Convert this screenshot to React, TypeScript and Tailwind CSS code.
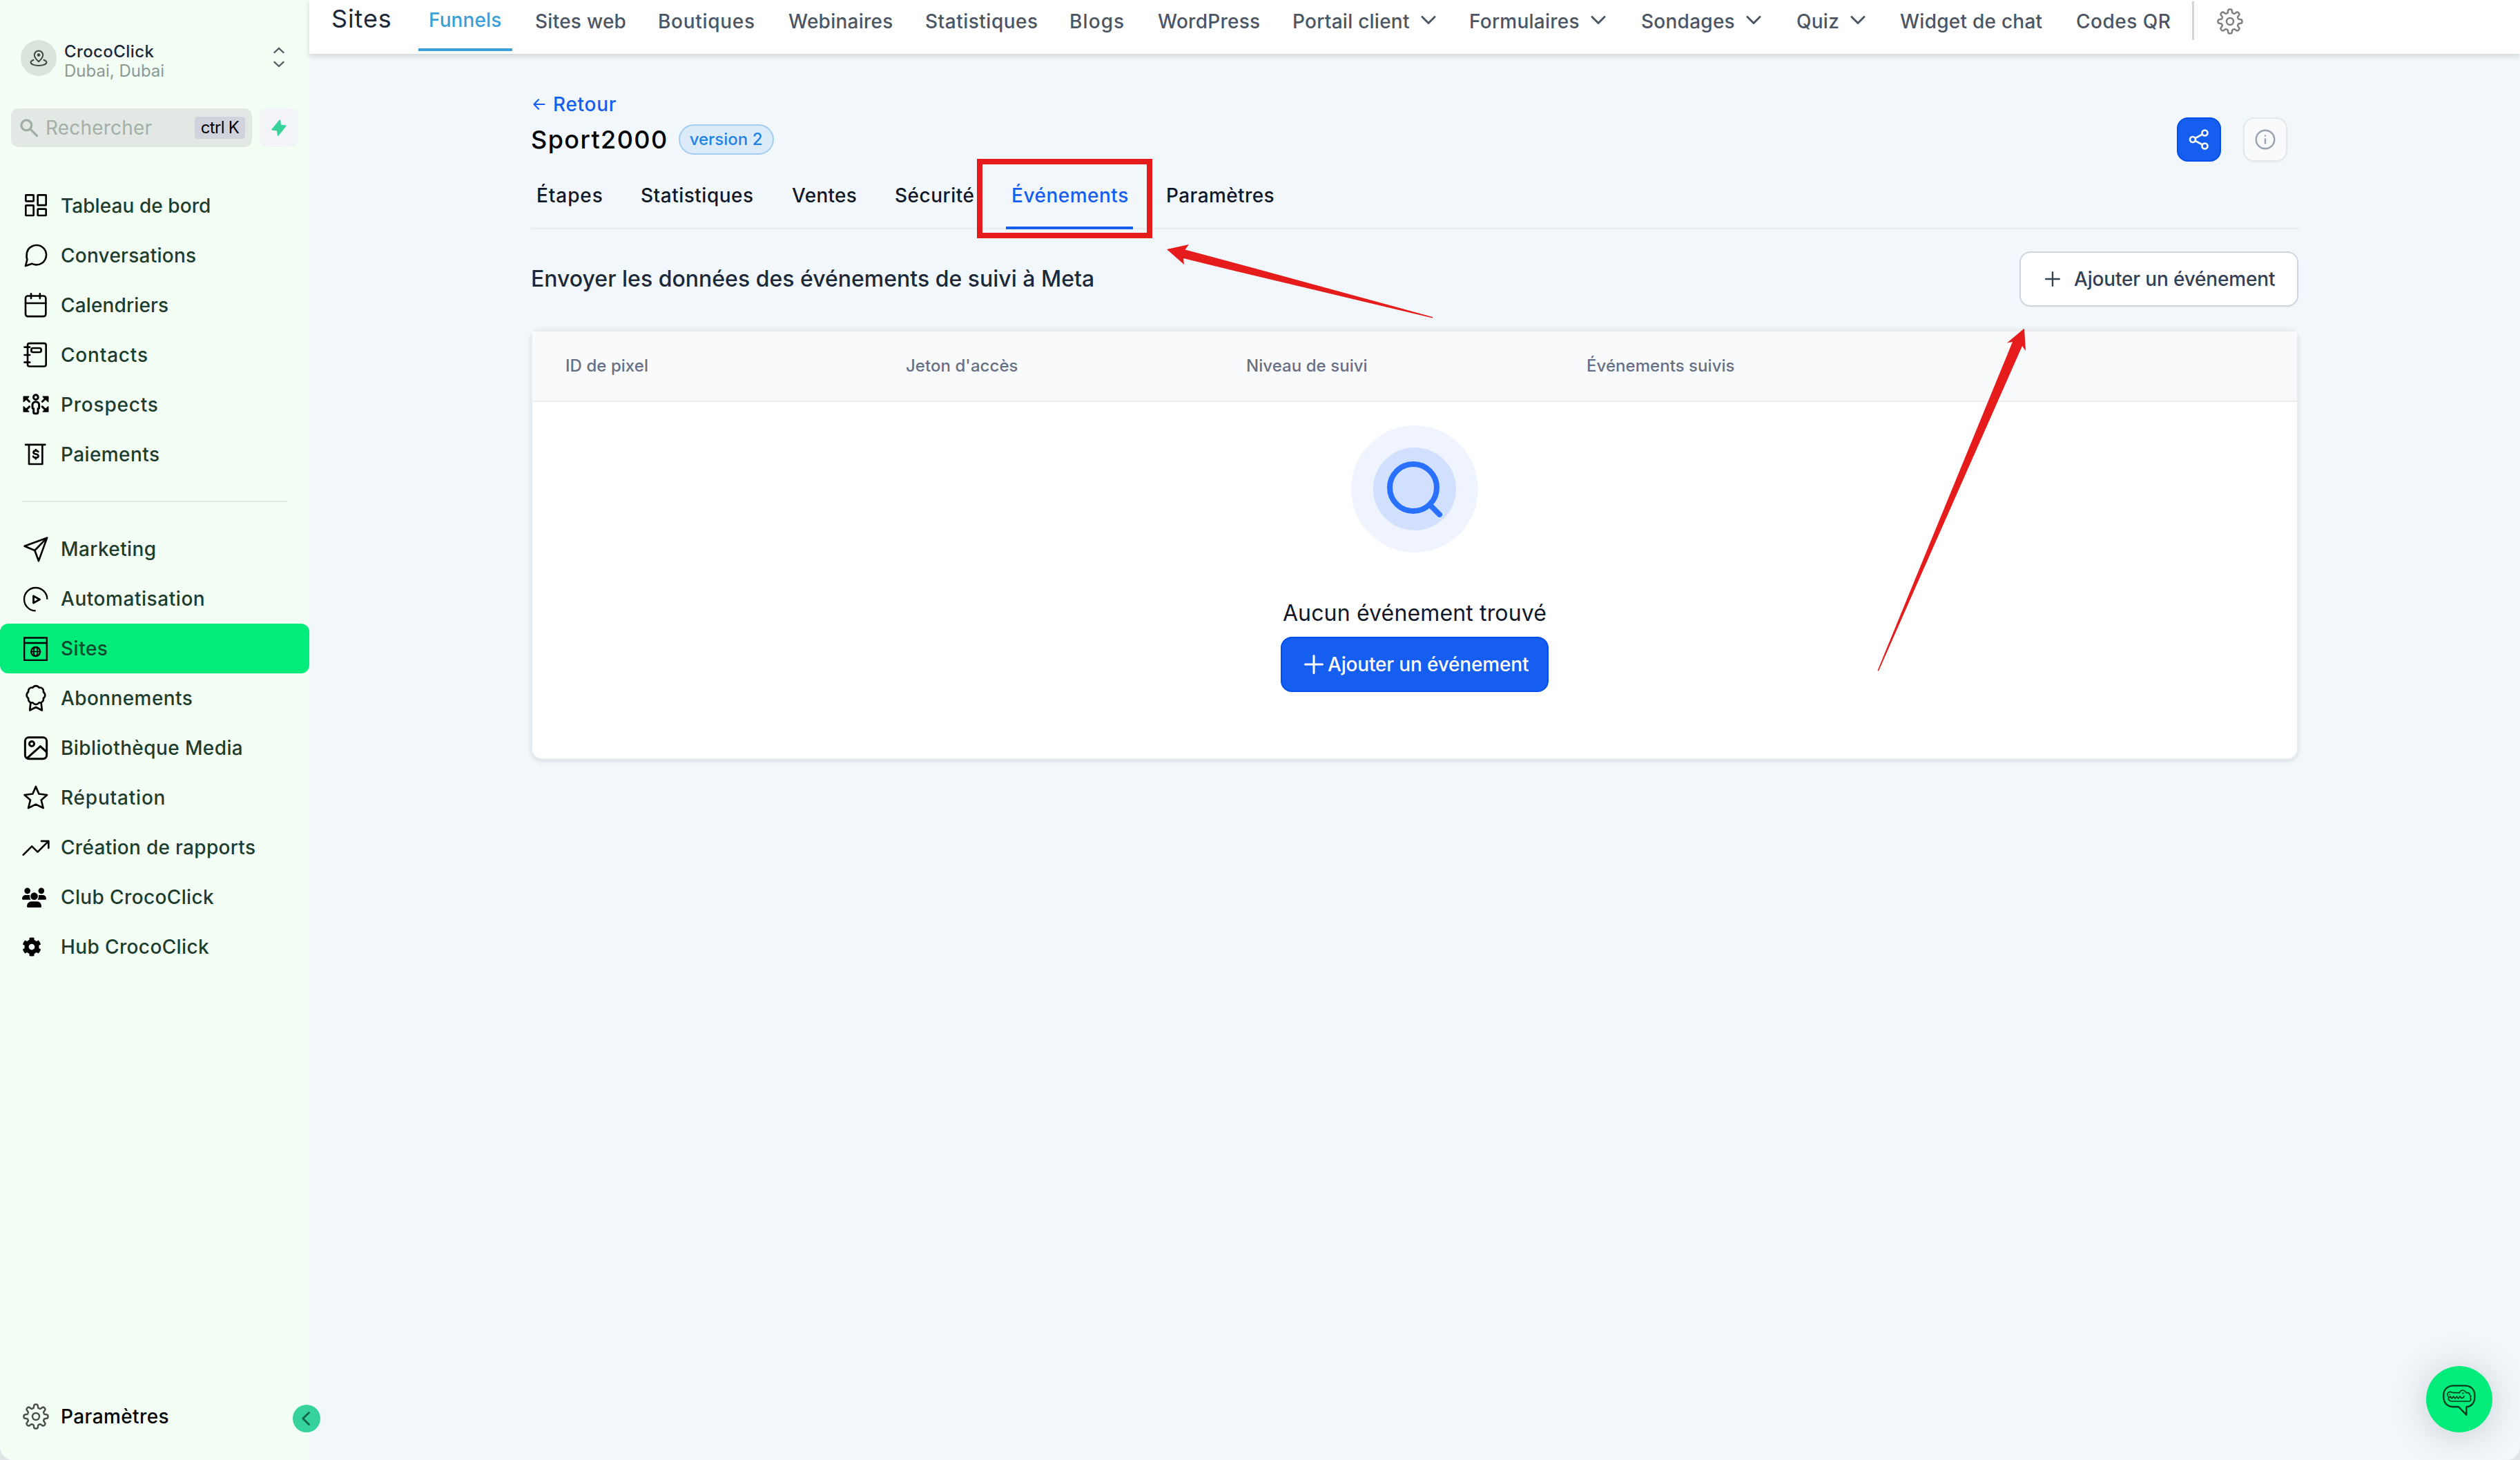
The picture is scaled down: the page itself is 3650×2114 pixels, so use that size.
import { FC, ReactNode } from "react";
import { FaCog } from "react-icons/fa";

type IconProps = {
  children: ReactNode;
  strokeWidth?: number;
};

const NavIcon: FC<IconProps> = ({ children, strokeWidth = 1.6 }) => (
  <svg
    viewBox="0 0 24 24"
    className="size-10 shrink-0 overflow-visible"
    fill="none"
    stroke="currentColor"
    strokeWidth={strokeWidth}
    strokeLinecap="round"
    strokeLinejoin="round"
    aria-hidden="true"
  >
    {children}
  </svg>
);

// eight soft teeth around a small hub
const gearPath = (() => {
  const points: string[] = [];
  for (let i = 0; i < 240; i++) {
    const angle = (i / 240) * Math.PI * 2;
    const wave = Math.tanh(2.2 * Math.cos(angle * 8)) / Math.tanh(2.2);
    const radius = 15 + 2.5 * wave;
    points.push(
      `${(20 + radius * Math.sin(angle)).toFixed(2)} ${(20 - radius * Math.cos(angle)).toFixed(2)}`
    );
  }
  return `M${points.join("L")}Z`;
})();

const GearIcon: FC<{ className?: string }> = ({ className }) => (
  <svg
    viewBox="0 0 40 40"
    className={className}
    fill="none"
    stroke="currentColor"
    strokeWidth={2.5}
    strokeLinejoin="round"
    aria-hidden="true"
  >
    <path d={gearPath} />
    <circle cx="20" cy="20" r="5" />
  </svg>
);

const PlusIcon: FC<{ className?: string }> = ({ className }) => (
  <svg
    viewBox="0 0 24 24"
    className={className}
    fill="none"
    stroke="currentColor"
    strokeWidth={2.6}
    strokeLinecap="round"
    aria-hidden="true"
  >
    <path d="M12 1.3v21.4M1.3 12h21.4" />
  </svg>
);

type NavEntry = {
  label: string;
  icon: ReactNode;
  active?: boolean;
  tracking?: string;
};

const mainNav: NavEntry[] = [
  {
    label: "Tableau de bord",
    tracking: "tracking-[0.06px]",
    icon: (
      <NavIcon>
        <rect x="3.2" y="2.6" width="6.8" height="5.4" rx="0.3" />
        <rect x="13.6" y="2.6" width="7.2" height="8.9" rx="0.3" />
        <rect x="3.2" y="11.6" width="6.8" height="8.8" rx="0.3" />
        <rect x="13.6" y="14.8" width="7.2" height="5.6" rx="0.3" />
      </NavIcon>
    ),
  },
  {
    label: "Conversations",
    tracking: "tracking-[0.25px]",
    icon: (
      <NavIcon>
        <path d="M21 11.5a8.38 8.38 0 0 1-.9 3.8 8.5 8.5 0 0 1-7.6 4.7 8.38 8.38 0 0 1-3.8-.9L3 21l1.4-5.4a8.38 8.38 0 0 1-.4-4.1 8.5 8.5 0 0 1 4.7-7.6 8.38 8.38 0 0 1 3.8-.9h.5a8.48 8.48 0 0 1 8 8v.5z" />
      </NavIcon>
    ),
  },
  {
    label: "Calendriers",
    tracking: "tracking-[0.14px]",
    icon: (
      <NavIcon>
        <rect x="3" y="3.9" width="17.6" height="17.8" rx="2" />
        <path d="M3 10.2h17.6M7.8 2v4M15.5 2v4" />
      </NavIcon>
    ),
  },
  {
    label: "Contacts",
    tracking: "tracking-[0.8px]",
    icon: (
      <NavIcon>
        <rect x="4.8" y="1.9" width="16" height="20" rx="1.6" />
        <rect x="8" y="6" width="8.6" height="3.6" rx="1.5" />
        <path d="M2.1 5.2h4.6M2.1 12h4.6M2.1 18.4h4.6" />
      </NavIcon>
    ),
  },
  {
    label: "Prospects",
    tracking: "tracking-[0.8px]",
    icon: (
      <NavIcon strokeWidth={1.8}>
        <circle cx="11.9" cy="5.5" r="2" />
        <path d="M11.9 9.4c-1.8 0-2.9 1.2-2.9 2.8v2c0 .8.5 1.2 1 1.3v3c0 .7.4 1.2 1 1.2h1.8c.6 0 1-.5 1-1.2v-3c.5-.1 1-.5 1-1.3v-2c0-1.6-1.1-2.8-2.9-2.8z" />
        <path d="M3 6l3.3 3.3M20.9 6l-3.3 3.3M3 17l3.3-3.3M20.9 17l-3.3-3.3" />
        <path
          fill="currentColor"
          strokeWidth={1}
          d="M1.4 5h4.4L1.4 9.2zM22.6 5h-4.4l4.4 4.2zM1.4 18h4.4l-4.4-4.2zM22.6 18h-4.4l4.4-4.2z"
        />
      </NavIcon>
    ),
  },
  {
    label: "Paiements",
    tracking: "tracking-[0.4px]",
    icon: (
      <NavIcon>
        <path d="M3 3.5h17M6 3.5v16.9h11.6V3.5" />
        <path d="M14 9.7c-.3-.6-1-.9-2.1-.9-1.3 0-2 .6-2 1.4 0 .9.8 1.3 2 1.5s2.2.6 2.2 1.6c0 .9-.9 1.5-2.2 1.5s-2-.4-2.2-1.1M11.9 7.8v1M11.9 14.8v1.1" />
      </NavIcon>
    ),
  },
];

const secondaryNav: NavEntry[] = [
  {
    label: "Marketing",
    tracking: "tracking-[0.4px]",
    icon: (
      <NavIcon>
        <path d="M21.7 2.2 14.4 22.3l-3.4-9.1L2.1 9.5zM21.7 2.2 11 13.2" />
      </NavIcon>
    ),
  },
  {
    label: "Automatisation",
    tracking: "tracking-[0.55px]",
    icon: (
      <NavIcon strokeWidth={1.4}>
        <path strokeLinecap="butt" d="M21.8 12.4a10 10 0 1 0-10 10" />
        <path strokeWidth={1.7} d="M9.9 9.6v6l5.4-3z" />
      </NavIcon>
    ),
  },
  {
    label: "Sites",
    active: true,
    tracking: "tracking-[0.5px]",
    icon: (
      <NavIcon strokeWidth={1.4}>
        <path strokeLinejoin="miter" d="M1.9 2.7h19.6v19.4H1.9zM1.9 7.2h19.6" />
        <circle cx="11.8" cy="14.7" r="3.9" />
        <ellipse cx="11.8" cy="14.7" rx="1.7" ry="3.9" strokeWidth={1} />
        <path strokeWidth={1} d="M7.9 14.7h7.8" />
      </NavIcon>
    ),
  },
  {
    label: "Abonnements",
    tracking: "tracking-[0.4px]",
    icon: (
      <NavIcon>
        <g transform="translate(2.4 -0.3) scale(0.8)">
          <path
            strokeWidth={2}
            d="M3.85 8.62a4 4 0 0 1 4.78-4.77 4 4 0 0 1 6.74 0 4 4 0 0 1 4.78 4.78 4 4 0 0 1 0 6.74 4 4 0 0 1-4.77 4.78 4 4 0 0 1-6.75 0 4 4 0 0 1-4.78-4.77 4 4 0 0 1 0-6.76Z"
          />
        </g>
        <path d="M7.4 16.2 6.7 22.5l5.3-2.7 5.3 2.7-.7-6.3" />
      </NavIcon>
    ),
  },
  {
    label: "Bibliothèque Media",
    tracking: "tracking-[0.4px]",
    icon: (
      <NavIcon strokeWidth={1.8}>
        <rect x="2.6" y="2.8" width="18.8" height="18.6" rx="3.2" />
        <circle cx="8.4" cy="8.4" r="2.1" />
        <path d="M4.6 20.6 15.9 10.6l5.2 4.8" />
      </NavIcon>
    ),
  },
  {
    label: "Réputation",
    tracking: "tracking-[0.8px]",
    icon: (
      <NavIcon>
        <path d="M11.9 2.4 14.6 8.7 21.7 9.6 16.6 14.1 18.4 21 11.9 17.8 5.4 21 7.2 14.1 2.1 9.6 9.2 8.7z" />
      </NavIcon>
    ),
  },
  {
    label: "Création de rapports",
    tracking: "tracking-[0.3px]",
    icon: (
      <NavIcon>
        <path d="M23 6.5 13.5 16 8.5 11 1 18.5M16.8 6.5H23v6" />
      </NavIcon>
    ),
  },
  {
    label: "Club CrocoClick",
    tracking: "tracking-[0.37px]",
    icon: (
      <NavIcon>
        <g fill="currentColor" stroke="none">
          <circle cx="4.6" cy="6.5" r="2.6" />
          <circle cx="16.7" cy="6.5" r="2.6" />
          <circle cx="10.5" cy="11.2" r="3.2" />
          <path d="M0 13.4c0-1.9 1.3-3.2 3.1-3.2h2.5c.4 0 .8.1 1.1.2-.3 1.4 0 2.7.8 3.8H.8c-.5 0-.8-.3-.8-.8zM21 13.4c0-1.9-1.3-3.2-3.1-3.2h-2.5c-.4 0-.8.1-1.1.2.3 1.4 0 2.7-.8 3.8h6.7c.5 0 .8-.3.8-.8z" />
          <path d="M4.2 19.9c0-2.3 1.7-4.1 3.9-4.1h4.8c2.2 0 3.9 1.8 3.9 4.1 0 .6-.4 1.1-1 1.1H5.2c-.6 0-1-.5-1-1.1z" />
        </g>
      </NavIcon>
    ),
  },
  {
    label: "Hub CrocoClick",
    tracking: "tracking-[0.38px]",
    icon: (
      <span className="flex w-10 shrink-0">
        <FaCog className="size-7" />
      </span>
    ),
  },
];

const NavItem: FC<{ entry: NavEntry }> = ({ entry }) => (
  <a
    className={`flex h-[72px] items-center rounded-xl pl-8 text-black ${
      entry.active ? "bg-[#02ec7b]" : ""
    }`}
  >
    {entry.icon}
    <span
      className={`ml-4 whitespace-nowrap text-[28px] leading-[72px] font-medium ${
        entry.active ? "text-[#0d4a2e]" : "text-[#203c2e]"
      } ${entry.tracking ?? ""}`}
    >
      {entry.label}
    </span>
  </a>
);

const Sidebar: FC = () => (
  <aside className="relative flex w-[448px] shrink-0 flex-col bg-[#f3fff5]">
    <div className="flex h-[157px] items-start pt-[58px] pl-[30px]">
      <div className="flex size-[52px] items-center justify-center rounded-full bg-[#d9e4db] text-[#3f4643]">
        <svg
          viewBox="0 0 26 26"
          className="size-[26px]"
          fill="none"
          stroke="currentColor"
          strokeWidth={2}
          strokeLinecap="round"
          aria-hidden="true"
        >
          <path d="M13 18.3c-3.6-3.4-6.2-6.2-6.2-9.6a6.2 6.2 0 0 1 12.4 0c0 3.4-2.6 6.2-6.2 9.6z" />
          <circle cx="13" cy="8.6" r="1.3" fill="currentColor" />
          <path d="M5.5 15.8c-2.4.9-3.9 2-3.9 3.4 0 2.7 5.1 4.8 11.4 4.8s11.4-2.1 11.4-4.8c0-1.4-1.5-2.5-3.9-3.4" />
        </svg>
      </div>
      <div className="ml-[11px] flex flex-1 flex-col pt-[3px] text-2xl">
        <span className="leading-7 font-medium tracking-[0.4px] text-[#1d2939]">
          CrocoClick
        </span>
        <span className="leading-7 text-[#8a9994]">Dubai, Dubai</span>
      </div>
      <svg
        viewBox="0 0 16 30"
        className="mt-[10px] mr-9 h-[30px] w-4"
        fill="none"
        stroke="#555f63"
        strokeWidth={2.4}
        strokeLinecap="round"
        strokeLinejoin="round"
        aria-hidden="true"
      >
        <path d="M1.5 8 8 1.8 14.5 8M1.5 21.8 8 28l6.5-6.2" />
      </svg>
    </div>

    <div className="flex gap-[11px] pl-4">
      <div className="flex h-14 w-[349px] items-center rounded-[10px] bg-[#e3e8e4] pr-[10px] pl-[13px]">
        <svg
          viewBox="0 0 27 27"
          className="size-[27px]"
          fill="none"
          stroke="#9fada5"
          strokeWidth={3.2}
          strokeLinecap="round"
          aria-hidden="true"
        >
          <circle cx="9.3" cy="9.3" r="7.4" />
          <path d="m15 15 9.5 9.7" />
        </svg>
        <span className="ml-[10px] flex-1 text-[28px] tracking-[0.2px] text-[#a3b0a8]">
          Rechercher
        </span>
        <kbd className="flex h-8 w-[73px] items-center justify-center rounded bg-[#d1d3dc] font-[Inter,sans-serif] text-2xl tracking-[-0.7px] whitespace-nowrap text-black">
          ctrl K
        </kbd>
      </div>
      <div className="flex size-14 items-center justify-center rounded-[10px] bg-[#f2f4f7]">
        <svg
          viewBox="0 0 22 24"
          className="h-6 w-[22px]"
          fill="#37d39b"
          stroke="#37d39b"
          strokeWidth={1.6}
          strokeLinejoin="round"
          aria-hidden="true"
        >
          <path d="M12.4 1 1 14.8l7.6.9L9.8 23 21 9.2l-7.6-1z" />
        </svg>
      </div>
    </div>

    <nav className="mt-[49px]">
      {mainNav.map((entry) => (
        <NavItem key={entry.label} entry={entry} />
      ))}
      <hr className="mx-8 mt-[31px] mb-8 border-t-2 border-[#e1e8e5]" />
      {secondaryNav.map((entry) => (
        <NavItem key={entry.label} entry={entry} />
      ))}
    </nav>

    <div className="mt-auto mb-[27px] flex h-[72px] items-center pl-8">
      <GearIcon className="size-10 text-[#4a4f4d]" />
      <span className="ml-4 text-[28px] font-medium tracking-[0.4px] text-black">
        Paramètres
      </span>
    </div>

    <button className="absolute right-[-16px] bottom-10 z-10 flex size-10 items-center justify-center rounded-full bg-[#35d39b]">
      <svg
        viewBox="0 0 12 20"
        className="-ml-0.5 h-5 w-3"
        fill="none"
        stroke="#14664a"
        strokeWidth={2.8}
        strokeLinecap="round"
        strokeLinejoin="round"
        aria-hidden="true"
      >
        <path d="M10.5 1.5 1.8 10l8.7 8.5" />
      </svg>
    </button>
  </aside>
);

const topTabs = [
  { label: "Sites web", width: "w-[178px]" },
  { label: "Boutiques", width: "w-[189px]", tracking: "tracking-[0.7px]" },
  { label: "Webinaires", width: "w-[198px]" },
  { label: "Statistiques", width: "w-[209px]", tracking: "tracking-[0.5px]" },
  { label: "Blogs", width: "w-[128px]", tracking: "tracking-[1.1px]" },
  { label: "WordPress", width: "w-[195px]" },
  { label: "Portail client", width: "w-[256px]", menu: true },
  { label: "Formulaires", width: "w-[249px]", menu: true },
  { label: "Sondages", width: "w-[225px]", menu: true },
  { label: "Quiz", width: "w-[150px]", menu: true },
  { label: "Widget de chat", width: "w-[255px]" },
  { label: "Codes QR", width: "w-[168px]", tracking: "tracking-[0.5px]" },
];

const TopBar: FC = () => (
  <header className="relative flex h-[78px] shrink-0 items-start bg-white pl-8 text-[28px] font-medium whitespace-nowrap text-[#4b5563] shadow-[0_3px_8px_rgba(16,24,40,0.16)]">
    <h1 className="w-[126px] text-4xl leading-[54px] font-normal tracking-[0.9px] text-[#1d2939]">
      Sites
    </h1>
    <a className="h-[74px] w-[136px] border-b-4 border-[#3b9fd8] pl-[15px] leading-[59px] tracking-[0.1px] text-[#3b9fd8]">
      Funnels
    </a>
    <nav className="ml-[33px] flex">
      {topTabs.map((tab) => (
        <a
          key={tab.label}
          className={`flex items-center leading-[62px] ${tab.width} ${
            tab.tracking ?? "tracking-[0.25px]"
          }`}
        >
          {tab.label}
          {tab.menu && (
            <svg
              viewBox="0 0 22 12"
              className="ml-4 h-3 w-[22px] -translate-y-0.5"
              fill="none"
              stroke="currentColor"
              strokeWidth={3}
              strokeLinecap="round"
              strokeLinejoin="round"
              aria-hidden="true"
            >
              <path d="m2 1.5 9 9 9-9" />
            </svg>
          )}
        </a>
      ))}
    </nav>
    <div className="mt-0.5 h-14 w-[3px] bg-[#d3d6db]" />
    <GearIcon className="mt-[11px] ml-8 size-10 text-[#7f7f7f]" />
  </header>
);

const pageTabs = [
  { label: "Étapes", width: "w-[151px]", tracking: "tracking-[0.9px]" },
  { label: "Statistiques", width: "w-[219px]", tracking: "tracking-[0.5px]" },
  { label: "Ventes", width: "w-[149px]", tracking: "tracking-[0.3px]" },
  { label: "Sécurité", width: "w-[169px]", tracking: "tracking-[0.5px]" },
  {
    label: "Événements",
    width: "w-[224px]",
    tracking: "tracking-[0.5px]",
    active: true,
  },
  { label: "Paramètres", width: "w-[160px]", tracking: "tracking-[0.4px]" },
];

const columns = [
  "ID de pixel",
  "Jeton d'accès",
  "Niveau de suivi",
  "Événements suivis",
];

const FunnelHeader: FC = () => (
  <>
    <a className="flex h-[39px] items-center text-[28px] leading-10 font-medium tracking-[0.7px] text-[#155eef]">
      <svg
        viewBox="0 0 18 16"
        className="ml-[3px] h-4 w-[18px]"
        fill="none"
        stroke="currentColor"
        strokeWidth={2.2}
        strokeLinecap="round"
        strokeLinejoin="round"
        aria-hidden="true"
      >
        <path d="M16.5 8H1.5M8 1.3 1.5 8 8 14.700" />
      </svg>
      <span className="ml-[11px]">Retour</span>
    </a>
    <div className="flex h-16 items-center">
      <h2 className="text-4xl leading-[66px] font-medium tracking-[1.4px] text-black">
        Sport2000
      </h2>
      <span className="ml-[15px] flex h-11 w-[138px] items-center justify-center rounded-full border-2 border-[#a3ccf3] bg-[#dbebfa] text-2xl font-medium text-[#2283e2]">
        version 2
      </span>
      <button className="ml-auto flex size-16 items-center justify-center rounded-2xl border-2 border-[#004eeb] bg-[#155eef] shadow-xs">
        <svg
          viewBox="0 0 30 32"
          className="h-8 w-[30px]"
          fill="none"
          stroke="#fff"
          strokeWidth={2.6}
          strokeLinecap="round"
          aria-hidden="true"
        >
          <circle cx="6" cy="16" r="4" />
          <circle cx="23.5" cy="6.5" r="4" />
          <circle cx="23.5" cy="25.5" r="4" />
          <path d="m9.6 14.1 10.3-5.6M9.6 17.9l10.3 5.6" />
        </svg>
      </button>
      <button className="mr-4 ml-8 flex size-16 items-center justify-center rounded-2xl border-2 border-[#e4e7ec] bg-[#f9fafc] shadow-xs">
        <svg
          viewBox="0 0 30 30"
          className="size-[30px]"
          fill="none"
          stroke="#98a2b3"
          strokeWidth={2.4}
          strokeLinecap="round"
          aria-hidden="true"
        >
          <circle cx="15" cy="15" r="13.3" />
          <path d="M15 14.5v6M15 9.5v.1" />
        </svg>
      </button>
    </div>
    <nav className="flex h-[98px] border-b-2 border-[#e9edf1] pl-2 text-[28px] leading-[98px] font-medium whitespace-nowrap text-[#101828]">
      {pageTabs.map((tab) => (
        <a
          key={tab.label}
          className={`relative h-[98px] ${tab.width} ${tab.tracking} ${
            tab.active ? "text-[#155eef]" : ""
          }`}
        >
          {tab.label}
          {tab.active && (
            <span className="absolute bottom-0 -left-2 h-1 w-[184px] bg-[#155eef]" />
          )}
        </a>
      ))}
    </nav>
  </>
);

const EventsTable: FC = () => (
  <section className="mt-8 h-[624px] rounded-2xl border-2 border-t-4 border-[#eaecf0] bg-white shadow-[0_2px_6px_rgba(16,24,40,0.12)]">
    <div className="flex h-[102px] items-center border-b-2 border-[#eaecf0] bg-[#f9fafc] pl-12 text-2xl font-medium tracking-[0.05px] text-[#667085]">
      {columns.map((column) => (
        <div key={column} className="w-[493px]">
          {column}
        </div>
      ))}
    </div>
    <div className="flex flex-col items-center pt-[34px]">
      <div className="flex size-[184px] items-center justify-center rounded-full bg-[#eff4ff]">
        <div className="flex size-[120px] items-center justify-center rounded-full bg-[#d1e0ff]">
          <svg
            viewBox="0 0 84 84"
            className="size-[84px]"
            fill="none"
            stroke="#2970ff"
            strokeWidth={8}
            strokeLinecap="round"
            aria-hidden="true"
          >
            <circle cx="40" cy="40" r="34" />
            <path d="m65 66 13 13" />
          </svg>
        </div>
      </div>
      <p className="mt-16 text-[32px] leading-[48px] tracking-[0.15px] text-[#101828]">
        Aucun événement trouvé
      </p>
      <button className="mt-2.5 flex h-20 w-[388px] items-center rounded-2xl border-2 border-[#004eeb] bg-[#155eef] pl-8 text-[28px] font-medium tracking-[-0.17px] whitespace-nowrap text-white">
        <PlusIcon className="size-7" />
        <span className="ml-1.5">Ajouter un événement</span>
      </button>
    </div>
  </section>
);

const ChatWidget: FC = () => (
  <button className="absolute right-10 bottom-10 flex size-24 items-center justify-center rounded-full bg-[#02ec7b] shadow-[0_4px_56px_rgba(0,0,0,0.18)]">
    <svg
      viewBox="255 213 165 150"
      className="h-[50px] w-[55px]"
      fill="none"
      stroke="#053d1c"
      strokeWidth={7}
      strokeLinejoin="round"
      aria-hidden="true"
    >
      <path d="M312 229h48c25 0 43 16 43 40v10c0 24-14 41-36 42v35l-34-35h-22c-26 0-43-17-43-42v-10c0-24 18-40 44-40z" />
      <path
        strokeWidth={5}
        d="M286 271c-3-10 3-15 11-15 6 0 8 4 14 4h26c3-11 9-11 15-11 8 0 10 6 14 10 10 0 16 4 16 10l5 6-3 7 3 7-5 8H306c-9 0-17-5-18-14"
      />
      <path
        strokeWidth={5}
        d="M285 270l6 12 7-6 6 9 7-9 7 9 7-9 7 9 7-9 7 7c8 0 11-5 11-10"
      />
      <circle cx="352" cy="262" r="3.5" fill="#053d1c" stroke="none" />
      <circle cx="295" cy="268" r="2.5" fill="#053d1c" stroke="none" />
    </svg>
  </button>
);

// red frame and pointers drawn over the page
const Annotations: FC = () => (
  <svg
    viewBox="0 0 3650 2114"
    className="pointer-events-none absolute inset-0 h-[2114px] w-[3650px]"
    aria-hidden="true"
  >
    <rect
      x="1419"
      y="234"
      width="246"
      height="107"
      fill="none"
      stroke="#e61c1c"
      strokeWidth={8}
    />
    <g fill="#e61c1c">
      <path d="M1690 361l32-7-5.5 7.5L1819 389l256 70v1.5L1771 388l-57-14 1 9z" />
      <path d="M2932 475.5l2 32.5-5-7L2721 971.5l-1.5-.5L2915 495l-8 1.5z" />
    </g>
  </svg>
);

export default function App() {
  return (
    <div className="h-[2114px] w-[3650px] bg-[#dfe4e6] font-[Inter,sans-serif]">
      <div className="relative flex size-full overflow-hidden rounded-b-[20px] bg-[#f1f7fa]">
        <Sidebar />
        <div className="flex flex-1 flex-col">
          <TopBar />
          <main className="ml-[321px] w-[2560px] pt-[53px]">
            <FunnelHeader />
            <div className="mt-8 flex h-20 items-center justify-between">
              <h3 className="text-[32px] font-medium text-[#1d2939]">
                Envoyer les données des événements de suivi à Meta
              </h3>
              <button className="flex h-20 w-[404px] items-center rounded-2xl border-2 border-[#d0d5dd] bg-white pl-[35px] text-[28px] font-medium tracking-[-0.17px] whitespace-nowrap text-[#344054] shadow-xs">
                <PlusIcon className="size-[22px]" />
                <span className="ml-5">Ajouter un événement</span>
              </button>
            </div>
            <EventsTable />
          </main>
        </div>
        <ChatWidget />
        <Annotations />
      </div>
    </div>
  );
}
